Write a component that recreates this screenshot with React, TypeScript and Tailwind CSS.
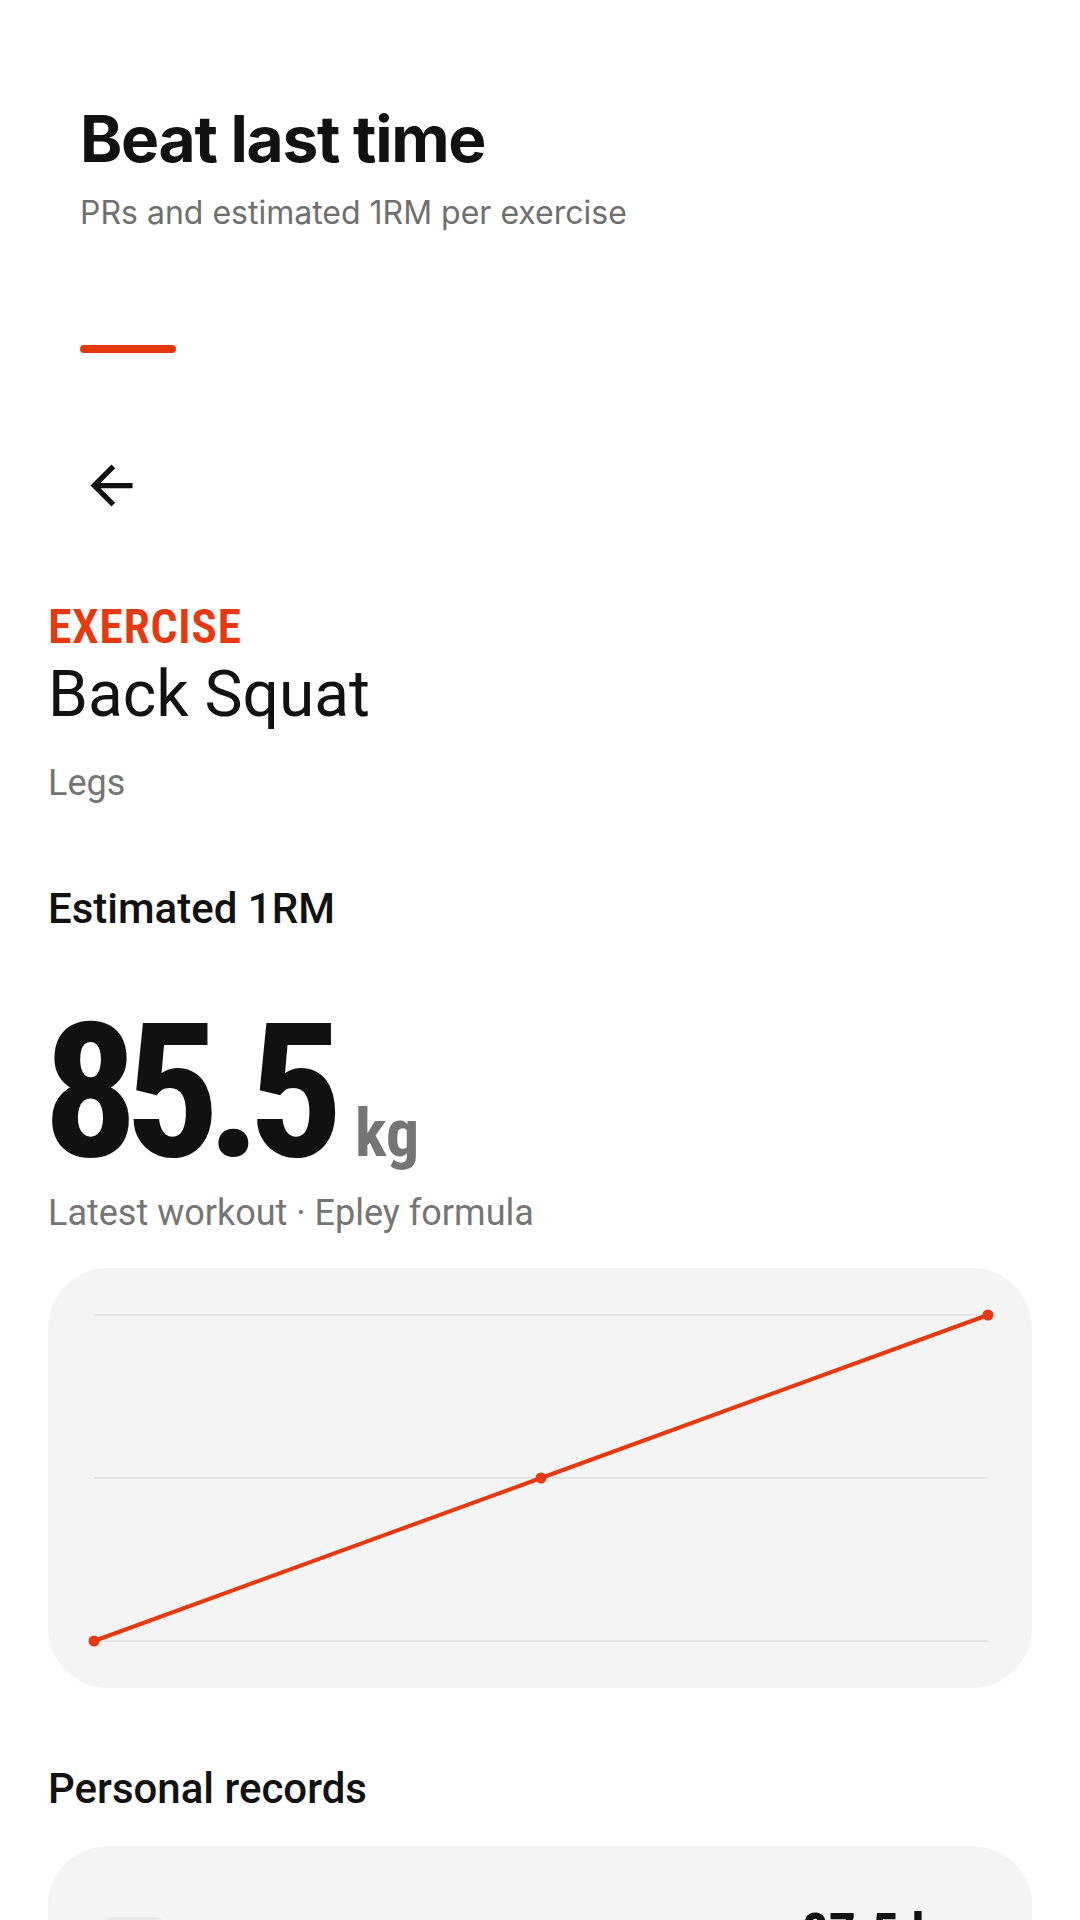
const points = [
  { x: 46, y: 373 },
  { x: 493, y: 210 },
  { x: 940, y: 47 },
];

const gridLines = [47, 210, 373];

function BackArrow() {
  return (
    <svg width="63" height="63" viewBox="0 0 24 24" fill="#111111">
      <path d="M20 11H7.83l5.59-5.59L12 4l-8 8 8 8 1.41-1.41L7.83 13H20v-2z" />
    </svg>
  );
}

function TrendChart() {
  const line = points.map((p) => `${p.x},${p.y}`).join(" ");
  return (
    <div className="mt-[33px] h-[420px] w-full rounded-[60px] bg-[#f4f4f4]">
      <svg width="984" height="420" viewBox="0 0 984 420" className="block">
        {gridLines.map((y) => (
          <line key={y} x1="46" x2="940" y1={y} y2={y} stroke="#e4e4e4" strokeWidth="2" />
        ))}
        <polyline points={line} fill="none" stroke="#e8390e" strokeWidth="4" strokeLinejoin="round" />
        {points.map((p) => (
          <circle key={p.x} cx={p.x} cy={p.y} r="5.5" fill="#e8390e" />
        ))}
      </svg>
    </div>
  );
}

export default function App() {
  return (
    <div className="min-h-screen w-full overflow-hidden bg-white text-[#111111]">
      {/* Header */}
      <header className="pl-[80px] pt-[100px] font-['Inter',sans-serif]">
        <h1 className="text-[64px] font-bold leading-[77px] tracking-[-0.02em]">Beat last time</h1>
        <p className="mt-[16px] text-[32px] leading-[40px] text-[#6f6f6f]">
          PRs and estimated 1RM per exercise
        </p>
        <div className="mt-[112px] h-[8px] w-[96px] rounded-full bg-[#e8390e]" />
        <button className="mt-[101px] block h-[63px] w-[63px]">
          <BackArrow />
        </button>
      </header>

      <main className="px-[48px] font-['Roboto',sans-serif]">
        <div className="mt-[80px] text-[48px] font-semibold leading-[60px] tracking-[0.01em] text-[#e8390e] [font-stretch:75%]">
          EXERCISE
        </div>
        <h2 className="text-[64px] leading-[75px]">Back Squat</h2>
        <div className="mt-[29px] text-[36px] leading-[44px] text-[#757575]">Legs</div>

        <h3 className="mt-[79px] text-[42px] font-medium leading-[50px]">Estimated 1RM</h3>

        <div className="mt-[64px] flex items-baseline">
          <span className="-ml-[5px] text-[188px] font-bold leading-none tracking-[-0.07em] [font-stretch:75%]">
            85.5
          </span>
          <span className="ml-[25px] text-[66px] font-bold leading-none text-[#757575] [font-stretch:75%]">kg</span>
        </div>
        <div className="mt-[5px] text-[36px] leading-[44px] text-[#757575]">
          Latest workout · Epley formula
        </div>

        <TrendChart />

        <h3 className="mt-[76px] text-[42px] font-medium leading-[50px]">Personal records</h3>

        <div className="mt-[32px] h-[300px] rounded-[60px] bg-[#f4f4f4] px-[50px] pt-[57px]">
          <div className="flex items-start justify-between">
            <div className="mt-[14px] h-[72px] w-[72px] rounded-[18px] bg-[#e6e6e6]" />
            <div className="mr-[18px] text-[54px] font-bold leading-[60px] [font-stretch:75%]">87.5 kg</div>
          </div>
        </div>
      </main>
    </div>
  );
}
